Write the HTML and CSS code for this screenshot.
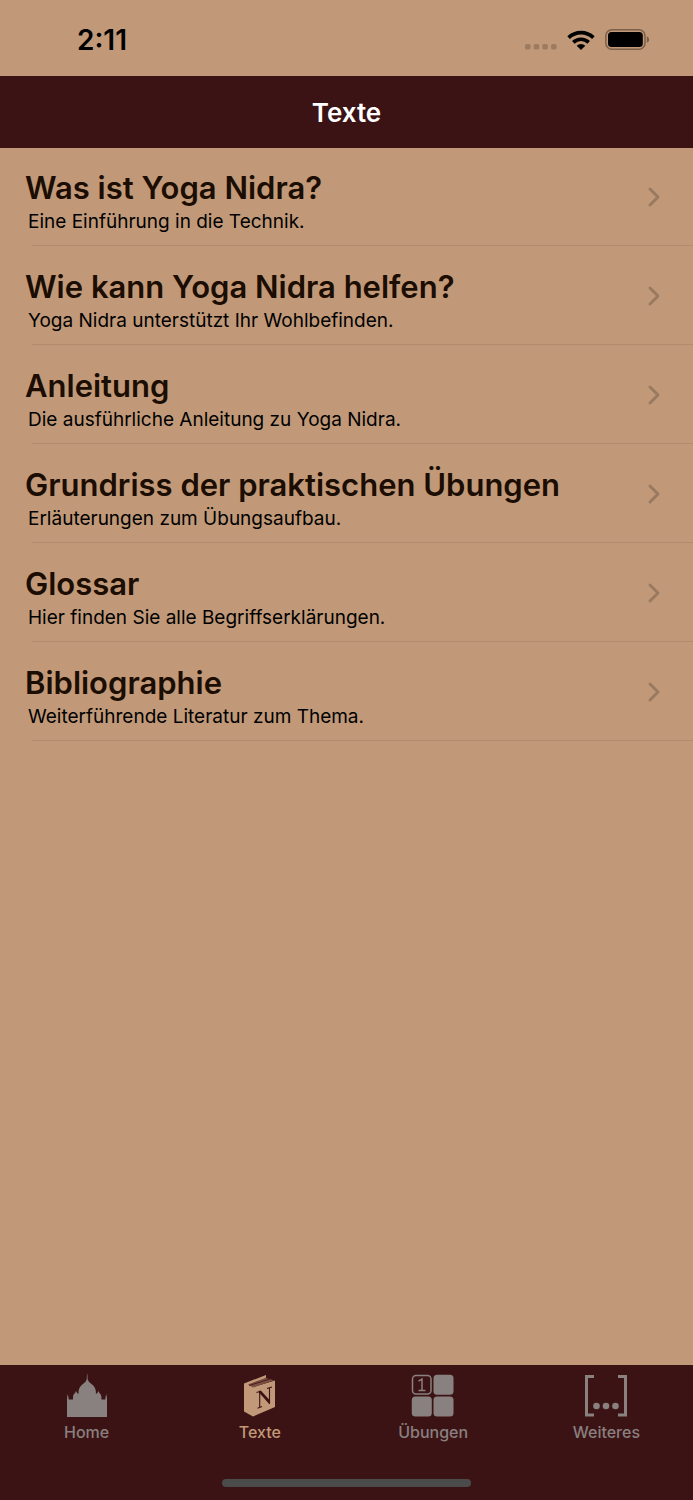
FILE: index.html
```
<!DOCTYPE html>
<html lang="de">
<head>
<meta charset="utf-8">
<meta name="viewport" content="width=device-width, initial-scale=1">
<title>Texte</title>
<link rel="stylesheet" href="styles.css">
</head>
<body>
<div class="status">
  <time class="clock">2:11</time>
  <div class="indicators">
    <svg width="32" height="6" viewBox="0 0 32 6" fill="#9d7b61" aria-hidden="true"><rect width="5.500" height="5.500" rx="1.500"/><rect x="8.700" width="5.500" height="5.500" rx="1.500"/><rect x="17.400" width="5.500" height="5.500" rx="1.500"/><rect x="26" width="5.500" height="5.500" rx="1.500"/></svg>
    <svg width="28" height="20" viewBox="0 0 28 20" aria-hidden="true"><g fill="none" stroke="#000" stroke-width="3.7"><path d="M1.6 7.6a17.800 17.800 0 0 1 24.800 0"/><path d="M6.300 12.300a11.200 11.200 0 0 1 15.400 0"/></g><path d="M14 20l-4.300-4.300a6.300 6.300 0 0 1 8.600 0z"/></svg>
    <svg width="44" height="21" viewBox="0 0 44 21" aria-hidden="true"><rect x=".8" y=".8" width="39.2" height="19.4" rx="6" fill="none" stroke="#7c604a" stroke-width="1.5"/><rect x="3" y="3" width="34.8" height="15" rx="3.5"/><path d="M41.8 7.2q2.4 1 2.4 3.3t-2.4 3.3z" fill="#7c604a"/></svg>
  </div>
</div>
<header class="navbar"><h1>Texte</h1></header>
<main>
  <ul class="list">
    <li><a class="row" href="#was"><span class="copy"><span class="title">Was ist Yoga Nidra?</span><span class="sub">Eine Einführung in die Technik.</span></span><svg class="chevron" viewBox="0 0 14 22"><path d="M3 3l8 8-8 8"/></svg></a></li>
    <li><a class="row" href="#wie"><span class="copy"><span class="title">Wie kann Yoga Nidra helfen?</span><span class="sub">Yoga Nidra unterstützt Ihr Wohlbefinden.</span></span><svg class="chevron" viewBox="0 0 14 22"><path d="M3 3l8 8-8 8"/></svg></a></li>
    <li><a class="row" href="#anleitung"><span class="copy"><span class="title">Anleitung</span><span class="sub">Die ausführliche Anleitung zu Yoga Nidra.</span></span><svg class="chevron" viewBox="0 0 14 22"><path d="M3 3l8 8-8 8"/></svg></a></li>
    <li><a class="row" href="#grundriss"><span class="copy"><span class="title">Grundriss der praktischen Übungen</span><span class="sub">Erläuterungen zum Übungsaufbau.</span></span><svg class="chevron" viewBox="0 0 14 22"><path d="M3 3l8 8-8 8"/></svg></a></li>
    <li><a class="row" href="#glossar"><span class="copy"><span class="title">Glossar</span><span class="sub">Hier finden Sie alle Begriffserklärungen.</span></span><svg class="chevron" viewBox="0 0 14 22"><path d="M3 3l8 8-8 8"/></svg></a></li>
    <li><a class="row" href="#bibliographie"><span class="copy"><span class="title">Bibliographie</span><span class="sub">Weiterführende Literatur zum Thema.</span></span><svg class="chevron" viewBox="0 0 14 22"><path d="M3 3l8 8-8 8"/></svg></a></li>
  </ul>
</main>
<footer class="bottom">
  <nav class="tabs">
    <a class="tab" href="#home"><svg width="44" height="44" viewBox="0 0 44 44" fill="currentColor" aria-hidden="true"><path d="M2 44V25l.8-4 .8 4v1.500h4.400v-3q.3-2.500 2-3.500l1-2 1 2q.8.300 1.500 1-.5-7 5-10.500 2.700-2 3.200-4l.3-5.500h.4l.3 5.500q.5 2 3.200 4 5.500 3.500 5 10.500.7-.7 1.500-1l1-2 1 2q1.700 1 2 3.500v3h4V25l.8-4 .8 4v19z"/></svg><span>Home</span></a>
    <a class="tab active" href="#texte" aria-current="page"><svg width="44" height="44" viewBox="0 0 44 44" aria-hidden="true"><path fill="currentColor" d="M6 10.500L28 2v3L11 11.500l4 2.500L37 7.500V34L15 43.500l-9-5z"/><path fill="#7c4f42" d="M10 11.500L28 5l8 2.300-21 7.200z"/><path d="M11 12.500L32 6" stroke="#3b1214" stroke-width=".8" fill="none"/><path d="M18.500 19.500l4-1.300M21.700 18.700v15.500M19.500 35.200l4.500-1.600M31.500 14.800v15.500M29 15.600l5-1.700" stroke="#3b1214" stroke-width="1.100" fill="none"/><path d="M21 17.700h2l9 9.800v3.500h-.8L21 19.500z" fill="#3b1214"/></svg><span>Texte</span></a>
    <a class="tab" href="#uebungen"><svg width="44" height="44" viewBox="0 0 44 44" fill="currentColor" aria-hidden="true"><rect x="1.500" y="2.500" width="18.500" height="18.500" rx="3.500" fill="none" stroke="currentColor" stroke-width="1.500"/><rect x="22.500" y="1.800" width="20" height="20" rx="3.500"/><rect x=".8" y="23.500" width="20" height="20" rx="3.500"/><rect x="22.500" y="23.500" width="20" height="20" rx="3.500"/><path d="M7.500 8.200l3.500-2.200v11.500M7.500 17.500h7" fill="none" stroke="currentColor" stroke-width="1.500"/></svg><span>Übungen</span></a>
    <a class="tab" href="#weiteres"><svg width="44" height="44" viewBox="0 0 44 44" fill="currentColor" aria-hidden="true"><path d="M10 3.500H2.500v38.500H10M34 3.500h7.500v38.500H34" fill="none" stroke="currentColor" stroke-width="3"/><circle cx="12.500" cy="33" r="3.300"/><circle cx="22" cy="33" r="3.300"/><circle cx="31.500" cy="33" r="3.300"/></svg><span>Weiteres</span></a>
  </nav>
  <div class="home-indicator"></div>
</footer>
</body>
</html>
```
FILE: styles.css
```
* { box-sizing: border-box; }
body {
  margin: 0;
  min-height: 100vh;
  display: flex;
  flex-direction: column;
  background: #c19978;
  color: #000;
  font-family: Inter, "Liberation Sans", sans-serif;
}
a { color: inherit; text-decoration: none; }
.status {
  height: 76px;
  padding: 3px 44px 0 77px;
  display: flex;
  align-items: center;
  justify-content: space-between;
}
.clock { font-size: 28px; font-weight: 600; }
.indicators { display: flex; align-items: center; gap: 10px; }
.indicators svg:first-child { align-self: flex-end; }
.navbar {
  height: 72px;
  display: grid;
  place-items: center;
  background: #3c1314;
  color: #fff;
}
.navbar h1 { margin: 0; font-size: 26px; font-weight: 600; }
main { flex: 1; margin-top: -1px; }
.list { list-style: none; margin: 0; padding: 0; }
.row {
  display: flex;
  align-items: center;
  justify-content: space-between;
  height: 99px;
  padding: 0 32px 0 25px;
  background: linear-gradient(#b18b6d, #b18b6d) 32px 100% / 100% 1px no-repeat;
}
.copy { display: flex; flex-direction: column; padding-top: 10px; }
.title { font-size: 31px; line-height: 40px; font-weight: 600; color: #1b0d02; }
.sub { font-size: 19px; line-height: 28px; padding-left: 3px; }
.chevron {
  width: 14px;
  height: 22px;
  fill: none;
  stroke: #997a61;
  stroke-width: 3;
  stroke-linecap: round;
  stroke-linejoin: round;
}
.bottom { background: #3c1314; padding-bottom: 13px; }
.tabs { display: grid; grid-template-columns: repeat(4, 1fr); height: 114px; }
.tab {
  display: flex;
  flex-direction: column;
  align-items: center;
  padding-top: 8px;
  gap: 5px;
  color: #898080;
  font-size: 16px;
  line-height: 20px;
  font-weight: 500;
}
.tab.active { color: #c19978; }
.home-indicator {
  width: 36%;
  height: 8px;
  margin: 0 auto;
  border-radius: 4px;
  background: #4b4b4b;
}
```
